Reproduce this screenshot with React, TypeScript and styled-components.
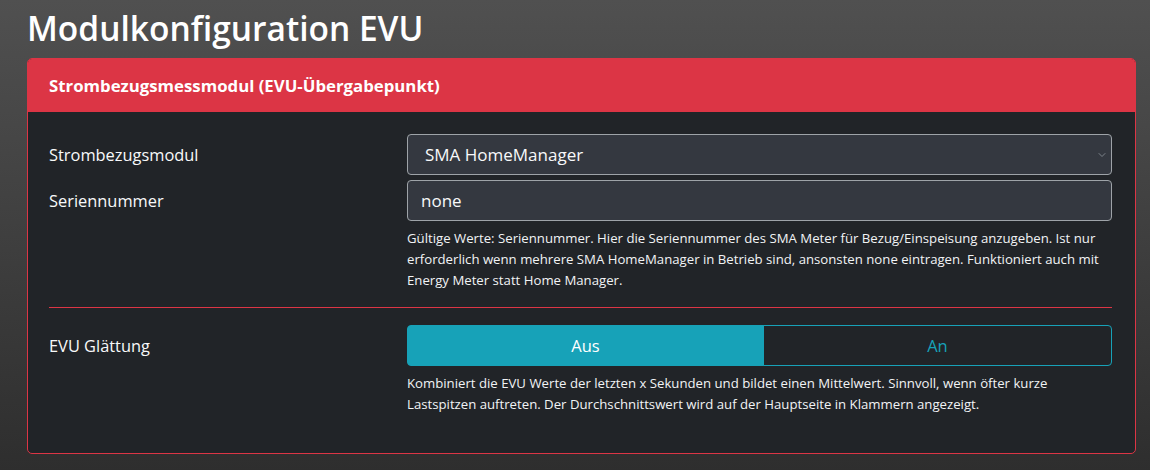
import React, { FC, useState } from "react";
import styled, { createGlobalStyle } from "styled-components";

const GlobalStyle = createGlobalStyle`
  html, body {
    margin: 0;
    padding: 0;
  }
  body {
    min-height: 470px;
    background: linear-gradient(180deg, #505050 0%, #2e2e2e 100%);
    font-family: "Open Sans", "Noto Sans", sans-serif;
    color: #f8f9fa;
  }
`;

const Page = styled.div`
  padding: 4px 14px 17px 27px;
`;

const Title = styled.h1`
  margin: 0 0 6px;
  font-size: 33.5px;
  font-weight: 600;
  line-height: 48px;
  color: #ffffff;
`;

const Card = styled.section`
  border: 1px solid #dc3545;
  border-radius: 5px;
  background: #212428;
  overflow: hidden;
`;

const CardHeader = styled.header`
  background: #dc3545;
  padding: 0 21px;
  height: 53px;
  display: flex;
  align-items: center;
  font-size: 16.8px;
  font-weight: 700;
  color: #ffffff;
`;

const CardBody = styled.div`
  padding: 22px 23px 38px 21px;
`;

const Row = styled.div`
  display: grid;
  grid-template-columns: 358px 1fr;
  align-items: start;
  & + & {
    margin-top: 5px;
  }
`;

const Label = styled.label`
  font-size: 16.4px;
  line-height: 41px;
  color: #f8f9fa;
`;

const Field = styled.div`
  display: flex;
  flex-direction: column;
`;

const SelectBox = styled.div`
  position: relative;
  height: 41px;
  box-sizing: border-box;
  border: 1px solid #9ea3a8;
  border-radius: 4px;
  background: #343840;
  display: flex;
  align-items: center;
  padding: 0 17px;
  font-size: 17px;
  color: #f8f9fa;
`;

const Chevron = styled.svg`
  position: absolute;
  right: 4px;
  top: 16px;
`;

const TextInput = styled.input`
  height: 41px;
  box-sizing: border-box;
  border: 1px solid #9ea3a8;
  border-radius: 4px;
  background: #343840;
  padding: 0 13px;
  font-family: inherit;
  font-size: 17px;
  color: #f8f9fa;
  outline: none;
`;

const Help = styled.p`
  margin: 7px 0 0;
  font-size: 13.2px;
  line-height: 21px;
  color: #f1f3f5;
`;

const Divider = styled.hr`
  border: none;
  border-top: 1px solid #dc3545;
  margin: 16px 0 17px;
`;

const ButtonGroup = styled.div`
  display: flex;
  height: 41px;
`;

const ToggleButton = styled.button<{ $active: boolean; $first: boolean }>`
  flex: 1 1 auto;
  box-sizing: border-box;
  border: 1px solid #17a2b8;
  border-radius: ${(p) => (p.$first ? "4px 0 0 4px" : "0 4px 4px 0")};
  background: ${(p) => (p.$active ? "#17a2b8" : "transparent")};
  color: ${(p) => (p.$active ? "#ffffff" : "#17a2b8")};
  padding: 0 12px;
  font-family: inherit;
  font-size: 16.5px;
  cursor: pointer;
  ${(p) => (p.$first ? "" : "margin-left: -1px;")}
`;

const App: FC = () => {
  const [smoothing, setSmoothing] = useState(false);
  const [serial, setSerial] = useState("none");

  return (
    <>
      <GlobalStyle />
      <Page>
        <Title>Modulkonfiguration EVU</Title>
        <Card>
          <CardHeader>Strombezugsmessmodul (EVU-Übergabepunkt)</CardHeader>
          <CardBody>
            <Row>
              <Label>Strombezugsmodul</Label>
              <Field>
                <SelectBox>
                  SMA HomeManager
                  <Chevron width="10" height="8" viewBox="0 0 16 16">
                    <path d="M2 5l6 6 6-6" fill="none" stroke="#7d838a" strokeWidth="2" strokeLinecap="round" strokeLinejoin="round" />
                  </Chevron>
                </SelectBox>
              </Field>
            </Row>
            <Row>
              <Label>Seriennummer</Label>
              <Field>
                <TextInput value={serial} onChange={(e) => setSerial(e.target.value)} />
                <Help>
                  Gültige Werte: Seriennummer. Hier die Seriennummer des SMA Meter für Bezug/Einspeisung anzugeben. Ist nur
                  erforderlich wenn mehrere SMA HomeManager in Betrieb sind, ansonsten none eintragen. Funktioniert auch mit
                  Energy Meter statt Home Manager.
                </Help>
              </Field>
            </Row>
            <Divider />
            <Row>
              <Label>EVU Glättung</Label>
              <Field>
                <ButtonGroup>
                  <ToggleButton $first $active={!smoothing} onClick={() => setSmoothing(false)}>
                    Aus
                  </ToggleButton>
                  <ToggleButton $first={false} $active={smoothing} onClick={() => setSmoothing(true)}>
                    An
                  </ToggleButton>
                </ButtonGroup>
                <Help>
                  Kombiniert die EVU Werte der letzten x Sekunden und bildet einen Mittelwert. Sinnvoll, wenn öfter kurze
                  Lastspitzen auftreten. Der Durchschnittswert wird auf der Hauptseite in Klammern angezeigt.
                </Help>
              </Field>
            </Row>
          </CardBody>
        </Card>
      </Page>
    </>
  );
};

export default App;
